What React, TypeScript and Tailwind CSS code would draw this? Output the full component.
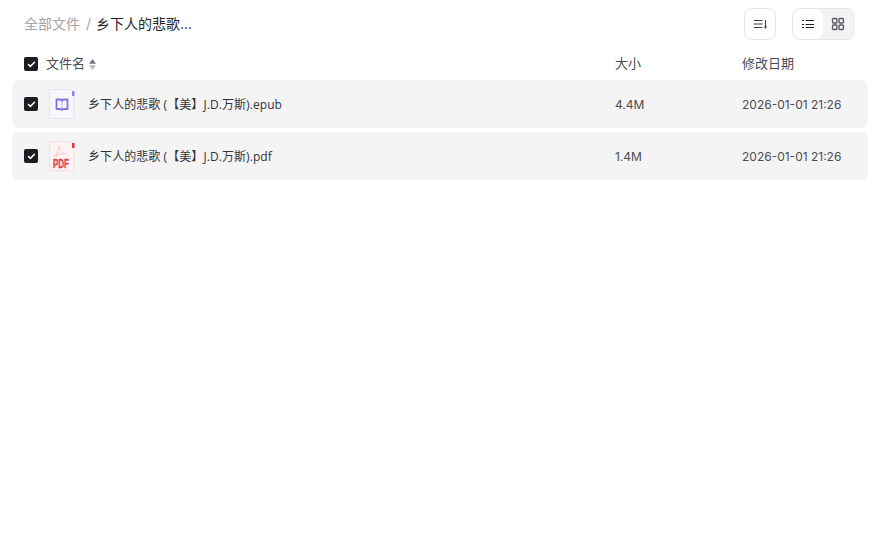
import { Check } from "lucide-react";

const files = [
  { name: "乡下人的悲歌 (【美】J.D.万斯).epub", size: "4.4M", date: "2026-01-01 21:26", type: "epub" },
  { name: "乡下人的悲歌 (【美】J.D.万斯).pdf", size: "1.4M", date: "2026-01-01 21:26", type: "pdf" },
];

const Checkbox = () => (
  <span className="flex h-[14px] w-[14px] shrink-0 items-center justify-center rounded-[2px] bg-[#1c1c22]">
    <Check size={9} strokeWidth={4} color="#fff" />
  </span>
);

const EpubIcon = () => (
  <svg width="28" height="32" viewBox="0 0 28 32" fill="none">
    <path d="M1.500 1.500h21.500l3 3v26h-24.500z" fill="#f7f6ff" stroke="#e6e3fb" />
    <rect x="24" y="3" width="2.500" height="5" fill="#8d83ea" />
    <path
      d="M8.500 11.500h3.500c.9 0 2 .5 2 1.500 0-1 1.100-1.500 2-1.500h3.500v9.500h-4c-.7 0-1.500.4-1.500 1 0-.6-.8-1-1.500-1h-4z"
      stroke="#7f76e6"
      strokeWidth="1.800"
      strokeLinejoin="round"
    />
    <path d="M14 14v6" stroke="#b7b2f0" strokeWidth="1" />
  </svg>
);

const PdfIcon = () => (
  <svg width="28" height="32" viewBox="0 0 28 32" fill="none">
    <path d="M1.500 1.500h21.500l3 3v26h-24.500z" fill="#fff2f2" stroke="#fbdcdc" />
    <rect x="24" y="3" width="2.500" height="5" fill="#e5383b" />
    <path
      d="M5.500 16.500c3-1.500 5.500-5 5.500-11 .5 4 3 7.500 6.500 8.500-3.500-.5-8 .5-10 2.500"
      stroke="#f9d2d2"
      strokeWidth="1.200"
    />
    <text
      transform="translate(5 28) scale(1 1.55)"
      fill="#e0474c"
      stroke="#e0474c"
      strokeWidth="0.25"
      fontFamily="Liberation Sans"
      fontSize="8"
      fontWeight="700"
    >
      PDF
    </text>
  </svg>
);

const SortIcon = () => (
  <svg width="16" height="16" viewBox="0 0 16 16" fill="none">
    <path d="M2 4.500h8.500M2 8h8.500M2 11.500h8.500" stroke="#3a3a42" strokeWidth="1" />
    <path d="M13.500 4v8" stroke="#3a3a42" strokeWidth="1" />
    <path d="M12 10.500h3l-1.500 2.500z" fill="#3a3a42" />
  </svg>
);

const ListIcon = () => (
  <svg width="14" height="14" viewBox="0 0 14 14" fill="none">
    <path d="M4.500 3.500H13M4.500 7.500H13M4.500 10.500H13" stroke="#1f1f26" strokeWidth="1" />
    <path d="M1 3.500h2M1 7.500h2M1 10.500h2" stroke="#1f1f26" strokeWidth="1" />
  </svg>
);

const GridIcon = () => (
  <svg width="14" height="14" viewBox="0 0 14 14" fill="none">
    <rect x="1.500" y="1.500" width="4.500" height="4.500" rx="1" stroke="#55555c" strokeWidth="1.300" />
    <rect x="8" y="1.500" width="4.500" height="4.500" rx="1" stroke="#55555c" strokeWidth="1.300" />
    <rect x="1.500" y="8" width="4.500" height="4.500" rx="1" stroke="#55555c" strokeWidth="1.300" />
    <rect x="8" y="8" width="4.500" height="4.500" rx="1" stroke="#55555c" strokeWidth="1.300" />
  </svg>
);

const App = () => {
  return (
    <div className="h-[550px] w-[878px] overflow-hidden bg-white font-['Inter','Noto_Sans_CJK_SC',sans-serif] text-[13px] text-[#4b4b55] [text-spacing-trim:space-all]">
      <div className="flex h-[48px] items-center justify-between pl-6 pr-6">
        <div className="flex items-center pb-[2px] text-[14px]">
          <span className="text-[#a3a3a8]">全部文件</span>
          <span className="mx-[6px] text-[#a3a3a8]">/</span>
          <span className="-ml-[1px] text-[#25252b]">乡下人的悲歌...</span>
        </div>
        <div className="flex items-center gap-4">
          <button className="flex h-8 w-8 items-center justify-center rounded-lg border border-[#e5e5e7] bg-white">
            <SortIcon />
          </button>
          <div className="flex h-8 w-[62px] overflow-hidden rounded-lg border border-[#e5e5e7] bg-[#f3f3f4]">
            <span className="flex w-[30px] items-center justify-center rounded-lg bg-white">
              <ListIcon />
            </span>
            <span className="flex flex-1 items-center justify-center">
              <GridIcon />
            </span>
          </div>
        </div>
      </div>

      <div className="flex h-[32px] items-center pl-6">
        <div className="flex w-[591px] items-center">
          <Checkbox />
          <span className="ml-2">文件名</span>
          <svg className="ml-[4px]" width="7" height="11" viewBox="0 0 7 11">
            <path d="M3.500 0.500l3 4h-6z" fill="#6f6f74" strokeLinejoin="round" stroke="#6f6f74" strokeWidth="0.500" />
            <path d="M3.500 10.500l3-4h-6z" fill="#b9b9bc" strokeLinejoin="round" stroke="#b9b9bc" strokeWidth="0.500" />
          </svg>
        </div>
        <span className="w-[127px]">大小</span>
        <span>修改日期</span>
      </div>

      <div className="flex flex-col gap-1 pl-3 pr-[10px]">
        {files.map((f) => (
          <div key={f.type} className="flex h-[48px] items-center rounded-md bg-[#f4f4f4] pl-3">
            <Checkbox />
            <span className="ml-[9px] flex w-[30px] shrink-0 justify-center">
              {f.type === "epub" ? <EpubIcon /> : <PdfIcon />}
            </span>
            <span className="ml-[11px] w-[527px] pt-[2px] font-['Open_Sans','Noto_Sans_CJK_SC',sans-serif] text-[12px] tracking-[0.07px] text-[#33333b]">
              {f.name}
            </span>
            <span className="w-[127px] pt-[2px] text-[12px]">{f.size}</span>
            <span className="pt-[2px] text-[12px]">{f.date}</span>
          </div>
        ))}
      </div>
    </div>
  );
};

export default App;
